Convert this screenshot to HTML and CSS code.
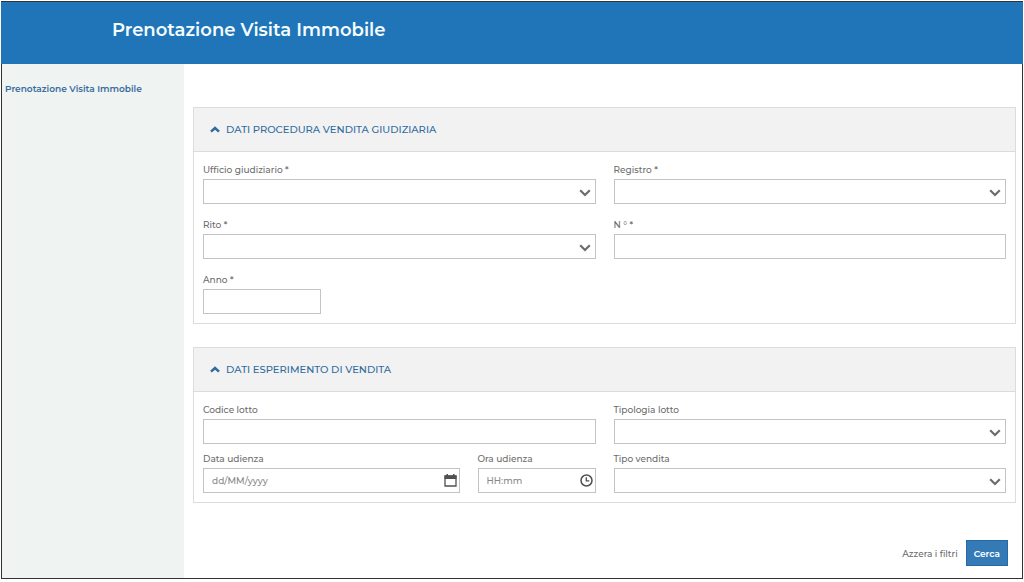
FILE: index.html
```html
<!DOCTYPE html>
<html lang="it">
<head>
<meta charset="utf-8">
<meta name="viewport" content="width=device-width, initial-scale=1">
<title>Prenotazione Visita Immobile</title>
<link rel="stylesheet" href="styles.css">
</head>
<body>
<svg class="sprite" aria-hidden="true">
  <symbol id="down" viewBox="0 0 12 8"><path d="M1.2 1.3 6 6l4.800-4.700" fill="none" stroke="currentColor" stroke-width="2.200"/></symbol>
  <symbol id="up" viewBox="0 0 10 7"><path d="M1 5.700 5 2l4 3.700" fill="none" stroke="currentColor" stroke-width="2.500"/></symbol>
  <symbol id="calendar" viewBox="0 0 13 13"><path d="M1 2h11v10H1z" fill="none" stroke="currentColor" stroke-width="1.300"/><path d="M.5 1.500h12V5H.5zM2.500 0H4v2H2.500zM9 0h1.500v2H9z" fill="currentColor"/></symbol>
  <symbol id="clock" viewBox="0 0 13 13"><circle cx="6.500" cy="6.500" r="5.500" fill="none" stroke="currentColor" stroke-width="1.500"/><path d="M6.300 3.300v3.600h3" fill="none" stroke="currentColor" stroke-width="1.300"/></symbol>
</svg>
<div class="frame">
  <header class="topbar"><h1 class="title">Prenotazione Visita Immobile</h1></header>
  <div class="columns">
    <nav class="sidebar"><a class="side-link" href="#prenotazione">Prenotazione Visita Immobile</a></nav>
    <main class="content" id="prenotazione">
      <form class="form">
        <section class="panel">
          <h2 class="panel-head"><button class="toggle" type="button" aria-expanded="true"><svg class="icon-up"><use href="#up"/></svg>DATI PROCEDURA VENDITA GIUDIZIARIA</button></h2>
          <div class="grid">
            <div class="field"><label class="label" for="ufficio">Ufficio giudiziario *</label>
              <div class="control"><select class="input" id="ufficio"><option></option></select><svg class="icon-down"><use href="#down"/></svg></div></div>
            <div class="field"><label class="label" for="registro">Registro *</label>
              <div class="control"><select class="input" id="registro"><option></option></select><svg class="icon-down"><use href="#down"/></svg></div></div>
            <div class="field"><label class="label" for="rito">Rito *</label>
              <div class="control"><select class="input" id="rito"><option></option></select><svg class="icon-down"><use href="#down"/></svg></div></div>
            <div class="field"><label class="label" for="numero">N ° *</label>
              <div class="control"><input class="input" id="numero" type="text"></div></div>
            <div class="field short"><label class="label" for="anno">Anno *</label>
              <div class="control"><input class="input" id="anno" type="text"></div></div>
          </div>
        </section>
        <section class="panel">
          <h2 class="panel-head"><button class="toggle" type="button" aria-expanded="true"><svg class="icon-up"><use href="#up"/></svg>DATI ESPERIMENTO DI VENDITA</button></h2>
          <div class="grid dense">
            <div class="field"><label class="label" for="codice">Codice lotto</label>
              <div class="control"><input class="input" id="codice" type="text"></div></div>
            <div class="field"><label class="label" for="tipologia">Tipologia lotto</label>
              <div class="control"><select class="input" id="tipologia"><option></option></select><svg class="icon-down"><use href="#down"/></svg></div></div>
            <div class="pair">
              <div class="field"><label class="label" for="data">Data udienza</label>
                <div class="control"><input class="input" id="data" type="text" placeholder="dd/MM/yyyy"><svg class="icon-end"><use href="#calendar"/></svg></div></div>
              <div class="field short"><label class="label" for="ora">Ora udienza</label>
                <div class="control"><input class="input" id="ora" type="text" placeholder="HH:mm"><svg class="icon-end"><use href="#clock"/></svg></div></div>
            </div>
            <div class="field"><label class="label" for="tipo">Tipo vendita</label>
              <div class="control"><select class="input" id="tipo"><option></option></select><svg class="icon-down"><use href="#down"/></svg></div></div>
          </div>
        </section>
        <div class="actions"><button class="reset" type="reset">Azzera i filtri</button><button class="submit" type="button">Cerca</button></div>
      </form>
    </main>
  </div>
</div>
</body>
</html>
```
FILE: styles.css
```css
* { box-sizing: border-box; }
body {
  margin: 0;
  min-height: 100vh;
  padding: 1px 1px 3px;
  display: flex;
  font-family: Montserrat, Inter, "Open Sans", sans-serif;
  color: #6c6c6c;
  background: #fff;
}
button, input, select { font: inherit; color: inherit; }
.sprite { position: absolute; width: 0; height: 0; }
.frame {
  flex: 1;
  display: flex;
  flex-direction: column;
  border: 1px solid #333;
}
.topbar {
  background: #1f75b8;
  padding: 15px 111px 21px;
  margin: 0 -1px;
}
.title {
  margin: 0;
  color: #f4fcff;
  font-size: 18px;
  line-height: 26px;
  font-weight: 600;
}
.columns { flex: 1; display: flex; }
.sidebar {
  flex: 0 0 182px;
  padding: 16px 3px;
  background: #eff3f2;
  font-size: 9px;
  line-height: 18px;
}
.side-link {
  color: #3a6d9f;
  font-weight: 600;
  text-decoration: none;
  white-space: nowrap;
}
.content { flex: 1; padding: 43px 6px 11px 9px; }
.form { display: flex; flex-direction: column; gap: 23px; }
.panel { border: 1px solid #dcdcdc; }
.panel-head {
  margin: 0;
  padding: 10px 16px;
  background: #f2f2f2;
  border-bottom: 1px solid #dcdcdc;
  font-size: 10px;
  line-height: 23px;
  font-weight: 500;
}
.toggle {
  display: flex;
  align-items: center;
  gap: 6px;
  padding: 0;
  border: 0;
  background: none;
  color: #2f6b9e;
}
.icon-up { width: 10px; height: 7px; }
.grid {
  display: grid;
  grid-template-columns: 1fr 1fr;
  gap: 13px 18px;
  padding: 11px 9px 9px;
}
.dense { row-gap: 7px; }
.field { display: flex; flex-direction: column; gap: 2px; }
.short { width: 118px; }
.pair { display: grid; grid-template-columns: 1fr 118px; gap: 18px; }
.label { font-size: 9px; line-height: 15px; font-weight: 500; }
.grid .label { line-height: 14px; }
.grid { row-gap: 14px; }
.grid.dense { row-gap: 8px; }
.control { position: relative; }
.input {
  display: block;
  width: 100%;
  height: 25px;
  padding: 0 8px;
  border: 1px solid #c4c4c4;
  border-radius: 0;
  background: #fff;
  font-size: 9px;
  font-weight: 500;
  appearance: none;
}
.input::placeholder { color: #888; opacity: 1; }
.icon-down, .icon-end { position: absolute; pointer-events: none; }
.icon-down { right: 5px; top: 10px; width: 12px; height: 8px; color: #6c6c6c; }
.icon-end { right: 3px; top: 6px; width: 13px; height: 13px; color: #505050; }
.actions {
  display: flex;
  justify-content: flex-end;
  align-items: center;
  gap: 8px;
  padding: 14px 8px 0;
  font-size: 9px;
  font-weight: 500;
}
.reset { padding: 0; border: 0; background: none; }
.submit {
  height: 26px;
  padding: 0 7px;
  border: 1px solid #2769a3;
  background: #337ab7;
  color: #fff;
  font-weight: 600;
}
```
